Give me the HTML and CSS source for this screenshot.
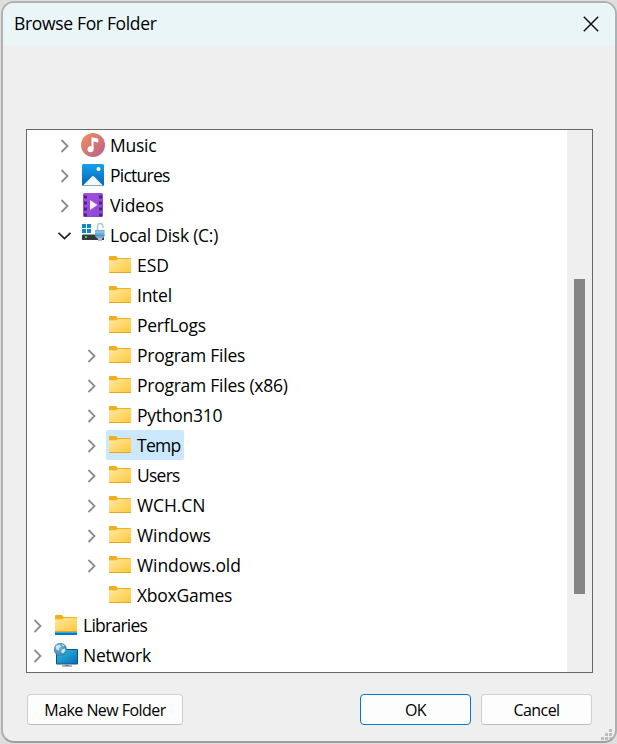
FILE: index.html
```html
<!DOCTYPE html>
<html lang="en">
<head>
<meta charset="utf-8">
<title>Browse For Folder</title>
<link rel="stylesheet" href="styles.css">
</head>
<body>
<svg class="defs" width="0" height="0" aria-hidden="true">
  <defs>
    <linearGradient id="gFolder" x1="0" y1="0" x2="1" y2="1"><stop offset="0" stop-color="#ffe8a0"/><stop offset="1" stop-color="#ffc83a"/></linearGradient>
    <linearGradient id="gMusic" x1="0" y1="0" x2="1" y2="1"><stop offset="0" stop-color="#f0925b"/><stop offset="1" stop-color="#b95f8e"/></linearGradient>
    <linearGradient id="gPic" x1="0" y1="0" x2="0" y2="1"><stop offset="0" stop-color="#16a0e8"/><stop offset="1" stop-color="#0563b8"/></linearGradient>
    <linearGradient id="gVid" x1="0" y1="0" x2="1" y2="1"><stop offset="0" stop-color="#a64fe0"/><stop offset="1" stop-color="#8a49d0"/></linearGradient>
    <linearGradient id="gNet" x1="0" y1="0" x2="1" y2="1"><stop offset="0" stop-color="#28c3d4"/><stop offset="1" stop-color="#0c6cc4"/></linearGradient>
    <radialGradient id="gGlobe" cx=".4" cy=".4" r=".65"><stop offset="0" stop-color="#79b9df"/><stop offset="1" stop-color="#347daf"/></radialGradient>
  </defs>
  <symbol id="right" viewBox="0 0 14 14"><path d="M3.5 1 9.5 7l-6 6" fill="none" stroke="#8c8c8c" stroke-width="1.8"/></symbol>
  <symbol id="down" viewBox="0 0 14 14"><path d="M.5 3.8 6.5 9.6 12.5 3.8" fill="none" stroke="#222" stroke-width="1.8"/></symbol>
  <symbol id="folder" viewBox="0 0 24 24"><path d="M1 4q0-1 1-1h5.5q1 0 1.5 1l.7 1H22q1 0 1 1v3H1z" fill="#f0af1c"/><path d="M1 7.2h7l2-1.2H23V19q0 1-1 1H2q-1 0-1-1z" fill="url(#gFolder)"/><path d="M1 19h22q0 1-1 1H2q-1 0-1-1z" fill="#e5a51e"/></symbol>
  <symbol id="library" viewBox="0 0 24 24"><path d="M1 3q0-1 1-1h6l1.5 2H22q1 0 1 1v4H1z" fill="#f3af16"/><path d="M1 6.2h7l2-1.2h13v14H1z" fill="url(#gFolder)"/><path d="M1 18h22v1H1z" fill="#e0a62a"/><path d="M1 19h22v3H1z" fill="#0878ca"/><path d="M1 19h22v1H1z" fill="#22b2e6"/></symbol>
  <symbol id="music" viewBox="0 0 24 24"><circle cx="12" cy="12" r="12" fill="url(#gMusic)"/><circle cx="9.5" cy="16.3" r="3" fill="#fff"/><path d="M10.5 16.3V4.8q0-.8.8-.6l5.3 1.4q.7.2.7.9v2.3q0 .8-.8.6l-4-1v7.9z" fill="#fff"/></symbol>
  <symbol id="pictures" viewBox="0 0 24 24"><rect x="1" y="1" width="22" height="22" rx="1.5" fill="url(#gPic)"/><path d="M2 22.5 11 13.4q1-.9 2 0l9 9.1z" fill="#f4faff"/><circle cx="17.5" cy="6" r="2" fill="#fff"/></symbol>
  <symbol id="videos" viewBox="0 0 24 24"><rect x="2" y="0" width="20" height="24" rx="1.5" fill="url(#gVid)"/><path d="M4.5 2.5v21M19.5 2.5v21" stroke="#492583" stroke-width="3" stroke-dasharray="3 3"/><path d="M9 7v10l7.5-5z" fill="#f8efff"/></symbol>
  <symbol id="disk" viewBox="0 0 24 24"><path d="M1 1h4v4H1zM6 1h4v4H6zM1 6h4v4H1zM6 6h4v4H6z" fill="#0b87ce"/><path d="M2 11h20l2 2H1z" fill="#9b9da0"/><rect x="1" y="12" width="22" height="5" fill="#33383c"/><rect x="4" y="13" width="2" height="2" fill="#42d546"/><path d="M16.5 7V3.5q0-3 2.7-3t2.7 3V5" fill="none" stroke="#b7c2ca" stroke-width="1.5"/><path d="M14 7h9.5v6l-1.5 2.5h-6L14 13z" fill="#6cacd3"/><path d="M14 8.5h9.5v1H14z" fill="#a9d2e7"/><path d="M14 12h9.5v1H14z" fill="#4c8ebc"/><path d="M17 15h4v3h-4z" fill="#b0bdc8"/></symbol>
  <symbol id="network" viewBox="0 0 24 24"><rect x="2" y="6" width="22" height="15.5" rx="1" fill="#155174"/><rect x="3" y="7" width="20" height="13.5" fill="url(#gNet)"/><path d="M11 21.5h4V23h-4z" fill="#8b959c"/><path d="M8 22.5h10v1H8z" fill="#606c74"/><circle cx="6.3" cy="6.3" r="6.5" fill="url(#gGlobe)"/><path d="M1.8 2.7 5.8 1.5l1.5 2-2 1.5-.5 2.5-3-1.5zM7.8 6.5l3-1 .8 2.3-2.8 2.7-1.6-1zM7.8 1l3 1.7-2 1z" fill="#cae6f1"/></symbol>
</svg>
<main class="window">
  <header class="titlebar">
    <h1 class="title">Browse For Folder</h1>
    <svg class="close" viewBox="0 0 16 16"><path d="M.8.8 15.2 15.2M15.2.8.8 15.2" stroke="#111" stroke-width="1.5"/></svg>
  </header>
  <section class="browser">
    <div class="tree">
      <div class="row l1"><svg class="arrow"><use href="#right"/></svg><div class="item"><svg class="icon"><use href="#music"/></svg><span class="label">Music</span></div></div>
      <div class="row l1"><svg class="arrow"><use href="#right"/></svg><div class="item"><svg class="icon"><use href="#pictures"/></svg><span class="label narrow">Pictures</span></div></div>
      <div class="row l1"><svg class="arrow"><use href="#right"/></svg><div class="item"><svg class="icon"><use href="#videos"/></svg><span class="label wide">Videos</span></div></div>
      <div class="row l1"><svg class="arrow"><use href="#down"/></svg><div class="item"><svg class="icon"><use href="#disk"/></svg><span class="label">Local Disk (C:)</span></div></div>
      <div class="row l2"><i class="arrow"></i><div class="item"><svg class="icon"><use href="#folder"/></svg><span class="label wide">ESD</span></div></div>
      <div class="row l2"><i class="arrow"></i><div class="item"><svg class="icon"><use href="#folder"/></svg><span class="label">Intel</span></div></div>
      <div class="row l2"><i class="arrow"></i><div class="item"><svg class="icon"><use href="#folder"/></svg><span class="label">PerfLogs</span></div></div>
      <div class="row l2"><svg class="arrow"><use href="#right"/></svg><div class="item"><svg class="icon"><use href="#folder"/></svg><span class="label">Program Files</span></div></div>
      <div class="row l2"><svg class="arrow"><use href="#right"/></svg><div class="item"><svg class="icon"><use href="#folder"/></svg><span class="label">Program Files (x86)</span></div></div>
      <div class="row l2"><svg class="arrow"><use href="#right"/></svg><div class="item"><svg class="icon"><use href="#folder"/></svg><span class="label">Python310</span></div></div>
      <div class="row l2"><svg class="arrow"><use href="#right"/></svg><div class="item selected"><svg class="icon"><use href="#folder"/></svg><span class="label narrow">Temp</span></div></div>
      <div class="row l2"><svg class="arrow"><use href="#right"/></svg><div class="item"><svg class="icon"><use href="#folder"/></svg><span class="label narrow">Users</span></div></div>
      <div class="row l2"><svg class="arrow"><use href="#right"/></svg><div class="item"><svg class="icon"><use href="#folder"/></svg><span class="label wide">WCH.CN</span></div></div>
      <div class="row l2"><svg class="arrow"><use href="#right"/></svg><div class="item"><svg class="icon"><use href="#folder"/></svg><span class="label wide">Windows</span></div></div>
      <div class="row l2"><svg class="arrow"><use href="#right"/></svg><div class="item"><svg class="icon"><use href="#folder"/></svg><span class="label wide">Windows.old</span></div></div>
      <div class="row l2"><i class="arrow"></i><div class="item"><svg class="icon"><use href="#folder"/></svg><span class="label">XboxGames</span></div></div>
      <div class="row"><svg class="arrow"><use href="#right"/></svg><div class="item"><svg class="icon"><use href="#library"/></svg><span class="label narrow">Libraries</span></div></div>
      <div class="row"><svg class="arrow"><use href="#right"/></svg><div class="item"><svg class="icon"><use href="#network"/></svg><span class="label">Network</span></div></div>
    </div>
    <div class="scrollbar"><div class="thumb"></div></div>
  </section>
  <footer class="actions">
    <button class="button make">Make New Folder</button>
    <button class="button ok">OK</button>
    <button class="button cancel">Cancel</button>
  </footer>
  <svg class="grip" viewBox="0 0 11 11"><path d="M8 0h3v3H8zM4 4h3v3H4zM8 4h3v3H8zM0 8h3v3H0zM4 8h3v3H4zM8 8h3v3H8z" fill="#bdbdbd"/></svg>
</main>
</body>
</html>
```
FILE: styles.css
```css
* { box-sizing: border-box; }
body {
  margin: 0;
  height: 744px;
  padding: 1px 0 0 1px;
  overflow: hidden;
  background: #dedede;
  color: #000;
  font: 17.5px "Open Sans", "Noto Sans", sans-serif;
}
.defs { position: absolute; }
.window {
  position: relative;
  width: 616px;
  height: 742px;
  border: 2px solid #b0b0b0;
  border-bottom-color: #a0a0a0;
  border-radius: 13px;
  background: #efefef;
  overflow: hidden;
}
.titlebar {
  display: flex;
  align-items: center;
  justify-content: space-between;
  height: 43px;
  padding: 0 16px 0 11px;
  background: #eaf5f8;
}
.title {
  margin: 0 0 3px;
  font-size: 17.5px;
  font-weight: 400;
  letter-spacing: -0.33px;
  line-height: 40px;
}
.close { width: 16px; height: 16px; margin-top: -2px; }
.browser {
  display: flex;
  justify-content: space-between;
  width: 567px;
  height: 544px;
  margin: 83px 0 0 23px;
  border: 1px solid #666;
  background: #fff;
}
.row {
  display: flex;
  align-items: center;
  height: 30px;
  padding-left: 4px;
}
.l1 { padding-left: 31px; }
.l2 { padding-left: 58px; }
.arrow { width: 14px; height: 14px; margin: 2px 7px 0 0; }
.item {
  display: flex;
  align-items: center;
  gap: 5px;
  height: 30px;
  padding: 0 4px 0 2px;
  border-radius: 2px;
  white-space: nowrap;
}
.label {
  line-height: 30px;
  letter-spacing: -0.25px;
}
.wide { letter-spacing: -0.08px; }
.narrow { letter-spacing: -0.75px; }
.selected { width: 78px; background: #cce8ff; }
.icon { width: 24px; height: 24px; overflow: visible; }
.scrollbar {
  width: 25px;
  padding: 149px 0 0 7px;
  background: #efefef;
}
.thumb { width: 11px; height: 315px; background: #868686; }
.actions { display: flex; padding: 21px 0 0 24px; }
.button {
  height: 31px;
  padding: 0;
  border: 1px solid #d0d0d0;
  border-bottom-color: #bcbcbc;
  border-radius: 4px;
  background: #fdfdfd;
  color: #000;
  font: 16px/28px "Open Sans", "Noto Sans", sans-serif;
  letter-spacing: -0.55px;
}
.make { width: 156px; }
.ok { width: 111px; margin: 0 10px 0 177px; border-color: #0078d4; }
.cancel { width: 111px; }
.grip { position: absolute; right: 3px; bottom: 1px; width: 11px; height: 11px; }
```
